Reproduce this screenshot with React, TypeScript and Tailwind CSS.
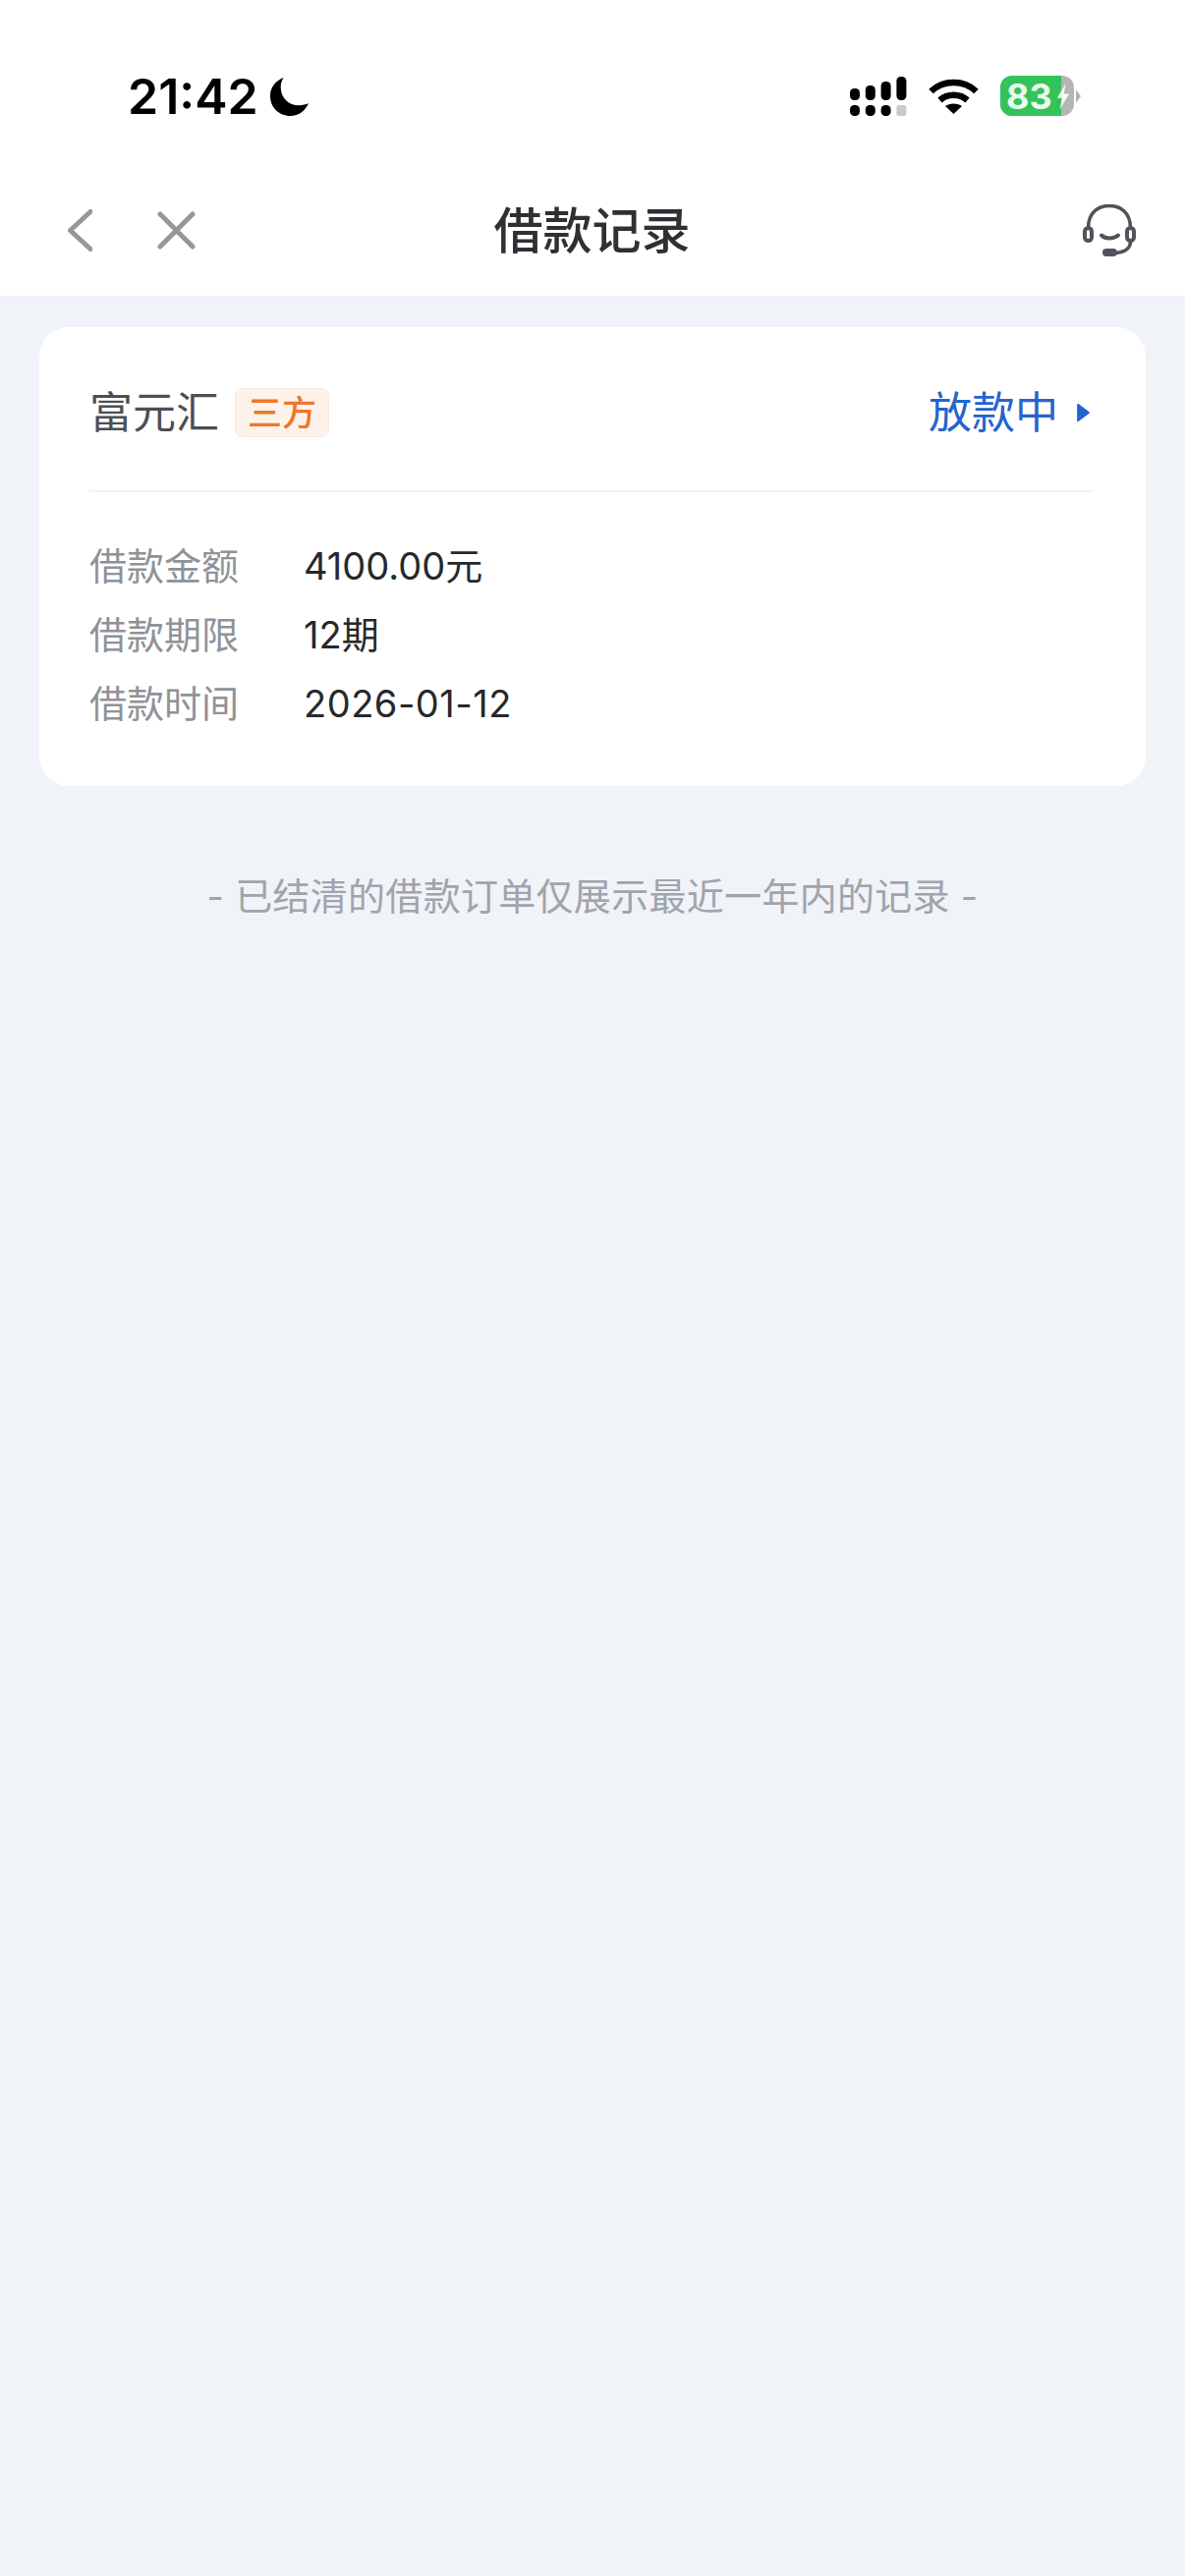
const CJK = "font-['Inter','Noto_Sans_CJK_SC',sans-serif]";

function Moon() {
  return (
    <svg width="41" height="41" viewBox="0 0 42 42" className="ml-[11px]">
      <path d="M15 1 C7 4 1 11 1 20 C1 32 10 41 22 41 C31 41 37 36 41 28 C38 29 35 30 31 30 C20 30 12 22 12 11 C12 7 13 4 15 1 Z" fill="#000" />
    </svg>
  );
}

function Signal() {
  const top = [12, 15, 19, 24];
  return (
    <svg width="60" height="41" viewBox="0 0 60 41">
      {top.map((h, i) => (
        <rect key={i} x={i * 15.8} y={25 - h} width="10" height={h} rx="4.5" fill="#000" />
      ))}
      {[0, 1, 2].map((i) => (
        <rect key={i} x={i * 15.8} y="30" width="10" height="11" rx="4.5" fill="#000" />
      ))}
      <rect x="47.4" y="30" width="10" height="11" rx="2.5" fill="#c9c9c9" />
    </svg>
  );
}

function Wifi() {
  return (
    <svg width="51" height="37" viewBox="0 0 51 37" fill="none" className="mt-[2px] ml-[20px]">
      <path d="M2.5 14 C15 2 36 2 48.5 14" stroke="#000" strokeWidth="6.5" />
      <path d="M11.5 23 C19 16 32 16 39.5 23" stroke="#000" strokeWidth="6.5" />
      <path d="M25.5 37 L17 29 C21 25.5 30 25.5 34 29 Z" fill="#000" />
    </svg>
  );
}

function Battery() {
  return (
    <div className="ml-[22px] flex items-center">
      <div className="relative flex h-[41px] w-[75px] items-center overflow-hidden rounded-[12px] bg-[#b5b5b5]">
        <div className="flex h-full w-[62px] items-center bg-[#34c35a] pl-[6px]">
          <span className="font-['Inter',sans-serif] text-[36px] leading-none font-bold text-[#e9fbee]">83</span>
        </div>
        <svg width="14" height="28" viewBox="0 0 16 30" className="absolute left-[57px] top-[7px]">
          <path d="M11 0 L1 17 L7 17 L4 30 L15 12 L9 12 Z" fill="#f2fbf4" />
        </svg>
      </div>
      <svg width="5" height="14" viewBox="0 0 5 14" className="ml-[2px]">
        <path d="M0 0 L5 7 L0 14 Z" fill="#b5b5b5" />
      </svg>
    </div>
  );
}

function Headset() {
  return (
    <svg width="54" height="54" viewBox="0 0 54 54" fill="none" stroke="#50535a">
      <path d="M5.5 24 C5.5 8 16 1.5 27 1.5 C38 1.5 48.5 8 48.5 24" strokeWidth="3.6" />
      <rect x="2" y="24" width="7" height="13" rx="3.5" strokeWidth="4" />
      <rect x="45" y="24" width="7" height="13" rx="3.5" strokeWidth="4" />
      <path d="M48.5 38 C48.5 45 42 49 32 49.5" strokeWidth="3.6" />
      <rect x="20" y="45" width="15" height="8" rx="4" fill="#50535a" stroke="none" />
      <path d="M19 31.5 C23 35.5 31 35.5 36 31.5" strokeWidth="4" strokeLinecap="round" />
    </svg>
  );
}

function InfoRow({ label, value, wide }: { label: string; value: string; wide?: boolean }) {
  return (
    <div className="flex h-[70px] items-center text-[38px]">
      <span className="w-[218px] text-[#8f9298]">{label}</span>
      <span className={wide ? "tracking-[0.5px] text-[#26282c]" : "text-[#26282c]"}>{value}</span>
    </div>
  );
}

export default function App() {
  return (
    <div className={`flex min-h-[2622px] w-[1206px] flex-col bg-[#f0f3f8] ${CJK}`}>
      {/* Status bar + nav */}
      <div className="bg-white">
        <div className="flex h-[170px] items-start justify-between pl-[130px] pr-[106px] pt-[70px]">
          <div className="flex items-center">
            <span className="text-[50px] leading-[56px] font-semibold text-black">21:42</span>
            <Moon />
          </div>
          <div className="flex items-start pt-[7px]">
            <Signal />
            <Wifi />
            <Battery />
          </div>
        </div>
        <div className="flex h-[131px] items-start pl-[49px] pr-[50px]">
          <div className="flex-1">
            <div className="ml-[20px] flex items-center gap-[66px] pt-[43px]">
              <svg width="25" height="43" viewBox="0 0 25 43" fill="none" stroke="#94979c" strokeWidth="5" strokeLinecap="round" strokeLinejoin="round">
                <path d="M23 2.5 L2.5 21.5 L23 40.5" />
              </svg>
              <svg width="39" height="39" viewBox="0 0 39 39" fill="none" stroke="#94979c" strokeWidth="5" strokeLinecap="round">
                <path d="M3 3 L36 36 M36 3 L3 36" />
              </svg>
            </div>
          </div>
          <h1 className="pt-[30px] text-[50px] leading-[70px] font-medium text-[#2e3034]">借款记录</h1>
          <div className="flex flex-1 justify-end pt-[38px]">
            <Headset />
          </div>
        </div>
      </div>

      {/* Loan card */}
      <div className="mx-[40px] mt-[32px] h-[467px] rounded-[30px] bg-white pl-[51px] pr-[53px]">
        <div className="flex h-[168px] items-center justify-between border-b-2 border-[#f1f2f4] pt-[8px]">
          <div className="flex items-center">
            <span className="text-[44px] text-[#4d4f54]">富元汇</span>
            <span className="ml-[16px] flex h-[50px] w-[96px] items-center justify-center rounded-[8px] border border-[#fce8d9] bg-[#fef3ea] text-[35px] font-medium text-[#f0772a]">三方</span>
          </div>
          <div className="flex items-center pr-[3px]">
            <span className="text-[44px] text-[#2563d0]">放款中</span>
            <svg width="15" height="20" viewBox="0 0 16 22" className="ml-[18px]">
              <path d="M2 2 L14 11 L2 20 Z" fill="#2563d0" stroke="#2563d0" strokeWidth="2" strokeLinejoin="round" />
            </svg>
          </div>
        </div>
        <div className="pt-[40px]">
          <InfoRow label="借款金额" value="4100.00元" />
          <InfoRow label="借款期限" value="12期" />
          <InfoRow label="借款时间" value="2026-01-12" wide />
        </div>
      </div>

      <p className="mt-[86px] text-center text-[38px] leading-[52px] tracking-[0.3px] text-[#a1a4aa]">- 已结清的借款订单仅展示最近一年内的记录 -</p>
    </div>
  );
}
